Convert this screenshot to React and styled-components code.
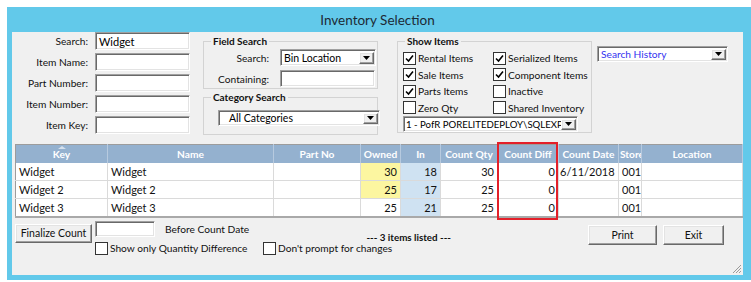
import React from "react";
import styled, { createGlobalStyle, css } from "styled-components";

const FONT = `Lato, "Noto Sans", sans-serif`;

const Global = createGlobalStyle`
  html, body { margin: 0; padding: 0; background: #fff; overflow: hidden; }
  body { font-family: ${FONT}; font-size: 10.2px; color: #000; }
  * { box-sizing: border-box; }
`;

const sunken = css`
  background: #fff;
  border: 1px solid;
  border-color: #a0a0a0 #ffffff #ffffff #a0a0a0;
  box-shadow: inset 1px 1px 0 #696969, inset -1px -1px 0 #e3e3e3;
`;

const raised = css`
  background: #f0f0f0;
  border: 1px solid;
  border-color: #ffffff #696969 #696969 #ffffff;
  box-shadow: inset -1px -1px 0 #a0a0a0, inset 1px 1px 0 #e3e3e3;
`;

const Window = styled.div`
  margin: 7px 0 0 7px;
  width: 744px;
  height: 273px;
  background: #62c9ea;
  padding: 0 8px 5px 5px;
  display: flex;
  flex-direction: column;
`;

const TitleBar = styled.div`
  height: 25px;
  display: flex;
  align-items: center;
  justify-content: center;
  font-size: 13.5px;
  color: #1d2a35;
`;

const Content = styled.div`
  flex: 1;
  background: #f0f0f0;
  position: relative;
  display: flex;
  flex-direction: column;
`;

const TopSection = styled.div`
  display: flex;
  align-items: flex-start;
  height: 112px;
`;

const LeftForm = styled.div`
  display: grid;
  grid-template-columns: 76px 95px;
  grid-auto-rows: 18px;
  column-gap: 7px;
  row-gap: 3px;
`;

const Label = styled.label`
  display: flex;
  align-items: center;
  justify-content: ${(p) => (p.$right ? "flex-end" : "flex-start")};
  white-space: nowrap;
  color: #111;
`;

const TextBox = styled.div`
  ${sunken};
  width: ${(p) => p.$w || 95}px;
  height: ${(p) => p.$h || 18}px;
  padding: 0 3px;
  display: flex;
  align-items: center;
  white-space: nowrap;
  font-size: 11px;
`;

const MiddleCol = styled.div`
  margin: 3px 0 0 13px;
  display: flex;
  flex-direction: column;
`;

const Group = styled.fieldset`
  margin: ${(p) => p.$mt || 0}px 0 0 ${(p) => p.$ml || 0}px;
  padding: 0 0 ${(p) => p.$pb || 0}px 0;
  border: 1px solid #d3d3d3;
  width: ${(p) => p.$w}px;
  min-width: 0;
`;

const Legend = styled.legend`
  margin-left: 7px;
  padding: 0 2px;
  font-weight: 700;
  font-size: 10px;
  line-height: 12px;
  color: #111;
`;

const FieldGrid = styled.div`
  display: grid;
  grid-template-columns: 65px 96px;
  grid-auto-rows: 17px;
  column-gap: 11px;
  row-gap: 4px;
  margin-top: 2px;
`;

const DropBox = styled.div`
  ${sunken};
  width: ${(p) => p.$w}px;
  height: ${(p) => p.$h || 17}px;
  margin: ${(p) => p.$m || "0"};
  display: flex;
  align-items: center;
  color: ${(p) => p.$color || "#000"};
  font-size: ${(p) => p.$fs || 10.5}px;
`;

const DropText = styled.span`
  flex: 1;
  padding-left: ${(p) => p.$pl || 3}px;
  white-space: nowrap;
  overflow: hidden;
`;

const ArrowBtn = styled.span`
  ${raised};
  width: 15px;
  height: calc(100% - 3px);
  margin-right: 1px;
  display: flex;
  align-items: center;
  justify-content: center;
  flex: none;
`;

const CheckGrid = styled.div`
  display: grid;
  grid-template-columns: 90px 1fr;
  grid-template-rows: repeat(4, 16.5px);
  grid-auto-flow: column;
  margin: 3px 0 0 5px;
`;

const CheckItem = styled.label`
  display: flex;
  align-items: center;
  gap: 2px;
  white-space: nowrap;
  color: #111;
`;

const Box = styled.span`
  width: 13px;
  height: 13px;
  border: 1px solid #333;
  background: #fff;
  display: inline-flex;
  align-items: center;
  justify-content: center;
  flex: none;
`;

const HistoryWrap = styled.div`
  margin: 14px 0 0 5px;
`;

const TableWrap = styled.div`
  position: relative;
  margin-left: 3px;
  width: 727px;
`;

const Grid = styled.table`
  width: 727px;
  table-layout: fixed;
  border-collapse: collapse;
  border: 1px solid #9c9c9c;
  border-bottom: 2px solid #a9a9a9;
  background: #fff;
  font-size: 11px;
`;

const HeadRow = styled.tr`
  height: 18px;
`;

const BodyRow = styled.tr`
  height: 18px;
`;

const Th = styled.th`
  background: #94b1cf;
  color: #fff;
  font-weight: 700;
  font-size: 10.2px;
  padding: 0 1px;
  text-align: center;
  border-right: 1px solid #b7cadf;
  white-space: nowrap;
  overflow: hidden;
  position: relative;
`;

const SortArrow = styled.span`
  position: absolute;
  top: 1px;
  left: 50%;
  transform: translateX(-50%);
  width: 0;
  height: 0;
  border-left: 4px solid transparent;
  border-right: 4px solid transparent;
  border-bottom: 3px solid #d5e0ec;
`;

const Td = styled.td`
  padding: 0 ${(p) => p.$pad ?? 3}px;
  border-right: 1px solid #dadada;
  border-bottom: 1px solid #dadada;
  text-align: ${(p) => p.$align || "left"};
  background: ${(p) => p.$bg || "#fff"};
  white-space: nowrap;
  overflow: hidden;
  color: #111;
`;

const RedBox = styled.div`
  position: absolute;
  left: 482px;
  top: -2px;
  width: 61px;
  height: 78px;
  border: 2px solid #e3202a;
  pointer-events: none;
`;

const BottomBar = styled.div`
  display: flex;
  align-items: flex-start;
  margin: 3px 0 0 3px;
`;

const Button = styled.button`
  ${raised};
  font-family: ${FONT};
  font-size: 10.5px;
  color: #111;
  width: ${(p) => p.$w}px;
  height: ${(p) => p.$h || 20}px;
  margin-top: ${(p) => p.$mt || 0}px;
  padding: 0;
  white-space: nowrap;
`;

const OptionsCol = styled.div`
  margin-left: 3px;
  width: 356px;
  display: flex;
  flex-direction: column;
`;

const OptionsRow = styled.div`
  display: flex;
  align-items: flex-start;
`;

const SideText = styled.span`
  margin-left: 10px;
  line-height: 16px;
  color: #111;
`;

const Status = styled.span`
  margin-left: auto;
  padding-top: 10px;
  line-height: 12px;
  font-weight: 700;
  font-size: 9.8px;
  color: #111;
`;

const ChecksRow = styled.div`
  display: flex;
  align-items: center;
  margin-top: -1px;
  height: 13px;
`;

const CheckSlot = styled.div`
  width: ${(p) => p.$w || "auto"}px;
`;

const ButtonGroup = styled.div`
  margin: 4px 19px 0 auto;
  display: flex;
  gap: 6px;
`;

const Grip = styled.svg`
  position: absolute;
  right: 1px;
  bottom: 1px;
`;

const Arrow = () => (
  <svg width="7" height="4" viewBox="0 0 7 4">
    <path d="M0 0 H7 L3.5 4 Z" fill="#000" />
  </svg>
);

const Dropdown = ({ w, h, m, color, pl, fs, children }) => (
  <DropBox $w={w} $h={h} $m={m} $color={color} $fs={fs}>
    <DropText $pl={pl}>{children}</DropText>
    <ArrowBtn>
      <Arrow />
    </ArrowBtn>
  </DropBox>
);

const Check = ({ checked, children }) => (
  <CheckItem>
    <Box>
      {checked && (
        <svg width="9" height="9" viewBox="0 0 9 9">
          <path d="M1 4.5 L3.5 7 L8 1.5" fill="none" stroke="#000" strokeWidth="1.6" />
        </svg>
      )}
    </Box>
    {children && <span>{children}</span>}
  </CheckItem>
);

const columns = [
  ["Key", 92],
  ["Name", 166],
  ["Part No", 87],
  ["Owned", 40],
  ["In", 40],
  ["Count Qty", 57],
  ["Count Diff", 61],
  ["Count Date", 60],
  ["Store", 23],
  ["Location", 101],
];

const rows = [
  { key: "Widget", name: "Widget", owned: 30, ownedHi: true, inn: 18, qty: 30, diff: 0, date: "6/11/2018", store: "001" },
  { key: "Widget 2", name: "Widget 2", owned: 25, ownedHi: true, inn: 17, qty: 25, diff: 0, date: "", store: "001" },
  { key: "Widget 3", name: "Widget 3", owned: 25, ownedHi: false, inn: 21, qty: 25, diff: 0, date: "", store: "001" },
];

export default function App() {
  return (
    <>
      <Global />
      <Window>
        <TitleBar>Inventory Selection</TitleBar>
        <Content>
          <TopSection>
            <LeftForm>
              <Label $right>Search:</Label>
              <TextBox>Widget</TextBox>
              <Label $right>Item Name:</Label>
              <TextBox />
              <Label $right>Part Number:</Label>
              <TextBox />
              <Label $right>Item Number:</Label>
              <TextBox />
              <Label $right>Item Key:</Label>
              <TextBox />
            </LeftForm>

            <MiddleCol>
              <Group $w={175} $pb={1}>
                <Legend>Field Search</Legend>
                <FieldGrid>
                  <Label $right>Search:</Label>
                  <Dropdown w={96}>Bin Location</Dropdown>
                  <Label $right>Containing:</Label>
                  <TextBox $w={95} $h={17} />
                </FieldGrid>
              </Group>
              <Group $w={175} $mt={2} $pb={8}>
                <Legend>Category Search</Legend>
                <Dropdown w={162} h={16} m="7px 0 0 14px" pl={10}>
                  All Categories
                </Dropdown>
              </Group>
            </MiddleCol>

            <Group $w={195} $ml={19} $mt={3} $pb={0}>
              <Legend>Show Items</Legend>
              <CheckGrid>
                <Check checked>Rental Items</Check>
                <Check checked>Sale Items</Check>
                <Check checked>Parts Items</Check>
                <Check>Zero Qty</Check>
                <Check checked>Serialized Items</Check>
                <Check checked>Component Items</Check>
                <Check>Inactive</Check>
                <Check>Shared Inventory</Check>
              </CheckGrid>
              <Dropdown w={175} h={16} m="0 0 0 5px" pl={2} fs={9.6}>
                1 - PofR PORELITEDEPLOY\SQLEXP #0
              </Dropdown>
            </Group>

            <HistoryWrap>
              <Dropdown w={131} h={16} color="#3434f0" fs={10.2}>
                Search History
              </Dropdown>
            </HistoryWrap>
          </TopSection>

          <TableWrap>
            <Grid>
              <colgroup>
                {columns.map(([n, w]) => (
                  <col key={n} style={{ width: w }} />
                ))}
              </colgroup>
              <thead>
                <HeadRow>
                  {columns.map(([n]) => (
                    <Th key={n}>
                      {n === "Key" && <SortArrow />}
                      {n}
                    </Th>
                  ))}
                </HeadRow>
              </thead>
              <tbody>
                {rows.map((r) => (
                  <BodyRow key={r.key}>
                    <Td>{r.key}</Td>
                    <Td>{r.name}</Td>
                    <Td />
                    <Td $align="right" $bg={r.ownedHi ? "#fcf6a0" : "#fff"}>{r.owned}</Td>
                    <Td $align="right" $bg="#cfe2f2">{r.inn}</Td>
                    <Td $align="right">{r.qty}</Td>
                    <Td $align="right">{r.diff}</Td>
                    <Td $pad={1}>{r.date}</Td>
                    <Td $pad={3}>{r.store}</Td>
                    <Td />
                  </BodyRow>
                ))}
              </tbody>
            </Grid>
            <RedBox />
          </TableWrap>

          <BottomBar>
            <Button $w={77} $h={19} $mt={3}>Finalize Count</Button>
            <OptionsCol>
              <OptionsRow>
                <TextBox $w={60} $h={16} />
                <SideText>Before Count Date</SideText>
                <Status>--- 3 items listed ---</Status>
              </OptionsRow>
              <ChecksRow>
                <CheckSlot $w={168}>
                  <Check>Show only Quantity Difference</Check>
                </CheckSlot>
                <CheckSlot>
                  <Check>Don't prompt for changes</Check>
                </CheckSlot>
              </ChecksRow>
            </OptionsCol>
            <ButtonGroup>
              <Button $w={69}>Print</Button>
              <Button $w={61}>Exit</Button>
            </ButtonGroup>
          </BottomBar>

          <Grip width="10" height="10" viewBox="0 0 10 10">
            <path d="M9 1 L1 9 M9 4 L4 9 M9 7 L7 9" stroke="#9a9a9a" strokeWidth="1" />
          </Grip>
        </Content>
      </Window>
    </>
  );
}
